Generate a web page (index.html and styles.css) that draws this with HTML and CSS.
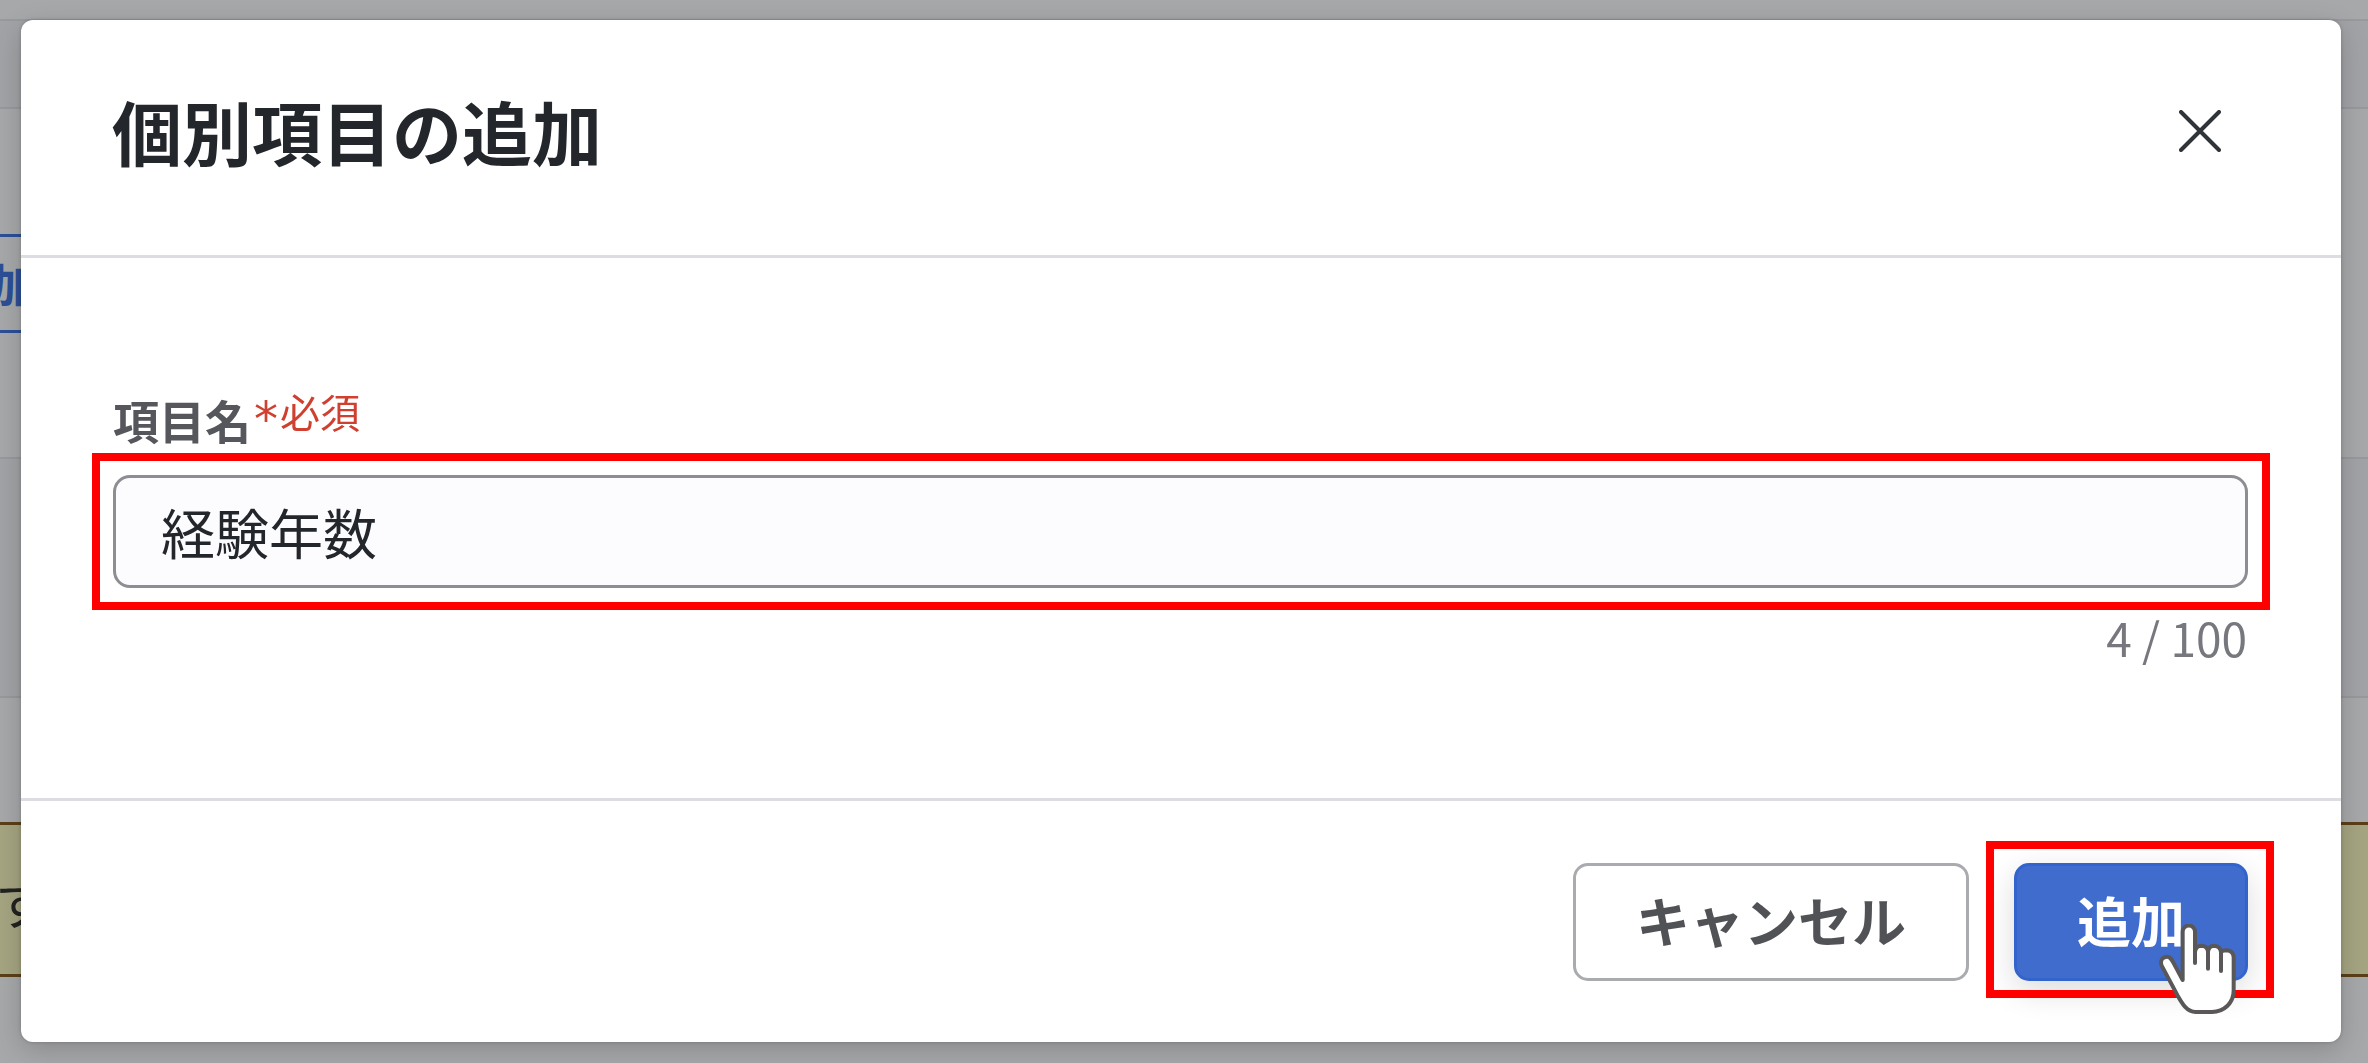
FILE: index.html
```
<!DOCTYPE html>
<html lang="ja">
<head>
    <meta charset="UTF-8">
    <meta name="viewport" content="width=device-width, initial-scale=1.0">
    <title>個別項目の追加</title>
    <link rel="stylesheet" href="styles.css">
</head>
<body>
    <!-- Page behind the dialog -->
    <div class="page" aria-hidden="true">
        <div class="page-top"></div>
        <div class="page-band page-heading"></div>
        <div class="page-section page-actions">
            <button type="button" class="page-add-btn" tabindex="-1">加</button>
        </div>
        <div class="page-band page-table-head"></div>
        <div class="page-section">
            <div class="page-notice">す</div>
        </div>
    </div>

    <div class="overlay">
        <form class="modal" role="dialog" aria-modal="true" aria-labelledby="modal-title">
            <div class="modal-header">
                <h1 class="modal-title" id="modal-title">個別項目の追加</h1>
                <button type="button" class="close-btn" aria-label="閉じる">
                    <svg class="close-icon" viewBox="0 0 42 42">
                        <path d="M2 2 L40 40 M40 2 L2 40"></path>
                    </svg>
                </button>
            </div>

            <div class="modal-body">
                <label class="field-label" for="item-name">項目名<span class="required"><span class="asterisk">*</span>必須</span></label>
                <div class="field-box highlight">
                    <input type="text" class="field-input" id="item-name" maxlength="100" value="経験年数" required>
                </div>
                <div class="counter">4 / 100</div>
            </div>

            <div class="modal-footer">
                <button type="button" class="btn cancel-btn">キャンセル</button>
                <div class="submit-box highlight">
                    <button type="submit" class="btn submit-btn">追加</button>
                    <svg class="cursor" viewBox="0 0 231 270" aria-hidden="true">
                        <path class="hand" d="M71 168 V23 A18 18 0 0 1 108 23 V83 Q110 65 128 65 Q146 66 147 83 Q149 65 166 65 Q184 66 186 84 Q190 79 204 79 Q223 81 224 100 V199 C224 238 194 264 159 264 H110 C83 264 69 238 56 215 L8 125 C2 110 11 98 24 98 C34 98 38 106 43 116 Z"></path>
                        <path class="fingers" d="M108 80 V117 M147 80 V134 M186 82 V141"></path>
                    </svg>
                </div>
            </div>
        </form>
    </div>
</body>
</html>
```
FILE: styles.css
```
/* Base Styles */
* {
    box-sizing: border-box;
}

body {
    margin: 0;
    height: 100vh;
    overflow: hidden;
    font-family: 'Noto Sans CJK JP', sans-serif;
    color: #23262b;
    background-color: #a7a8aa;
}

button, input {
    font-family: inherit;
}

/* Page behind the dialog */
.page {
    display: flex;
    flex-direction: column;
    height: 100%;
}

.page-top {
    height: 19px;
}

.page-band {
    background-color: #a2a3a6;
    border-top: 2px solid #98999c;
    border-bottom: 2px solid #98999c;
}

.page-heading {
    height: 90px;
}

.page-actions {
    height: 348px;
    padding-top: 125px;
}

.page-table-head {
    height: 241px;
}

.page-add-btn {
    display: block;
    height: 99px;
    width: 120px;
    margin-left: -13px;
    padding: 0 0 4px;
    border: 3px solid #2c4f96;
    background: none;
    color: #2c4f96;
    font-size: 46px;
    font-weight: 700;
    text-align: left;
}

.page-notice {
    height: 155px;
    margin: 124px -8px 0;
    border: 3px solid #5a4018;
    background-color: #a5a582;
    color: #222222;
    font-size: 54px;
    line-height: 154px;
}

/* Dialog */
.overlay {
    position: fixed;
    inset: 0;
    padding: 20px 27px 21px 21px;
}

.modal {
    display: flex;
    flex-direction: column;
    height: 100%;
    background-color: white;
    border-radius: 12px;
    box-shadow: 0 8px 28px rgba(0,0,0,0.18), 0 0 4px rgba(0,0,0,0.2);
}

.modal-header {
    display: flex;
    justify-content: space-between;
    align-items: center;
    padding: 61px 92px 74px 91px;
    border-bottom: 3px solid #dcdde2;
}

.modal-title {
    margin: 0;
    font-size: 70px;
    line-height: 100px;
    font-weight: 700;
}

.close-btn {
    display: flex;
    padding: 28px;
    border: none;
    background: none;
    cursor: pointer;
}

.close-icon {
    width: 42px;
    height: 42px;
    fill: none;
    stroke: #303338;
    stroke-width: 4;
    stroke-linecap: round;
}

/* Form field */
.modal-body {
    flex: 1;
    padding: 129px 93px 0 92px;
}

.field-label {
    display: flex;
    height: 64px;
    margin-bottom: 24px;
    font-size: 46px;
    line-height: 64px;
    font-weight: 700;
    color: #55575c;
}

.required {
    display: flex;
    margin-left: 3px;
    font-size: 40px;
    line-height: 48px;
    font-weight: 400;
    color: #cf4030;
}

.asterisk {
    margin-right: 2px;
    font-family: 'DejaVu Sans', sans-serif;
    font-size: 48px;
    line-height: 64px;
}

.field-input {
    display: block;
    width: 100%;
    height: 113px;
    padding: 0 45px;
    border: 3px solid #8d8e93;
    border-radius: 17px;
    background-color: #fcfcff;
    color: #23262b;
    font-size: 54px;
    outline: none;
}

.counter {
    margin-top: 17px;
    padding-right: 1px;
    font-size: 46px;
    line-height: 64px;
    text-align: right;
    color: #77787d;
}

/* Buttons */
.modal-footer {
    display: flex;
    justify-content: flex-end;
    gap: 45px;
    padding: 62px 93px 61px;
    border-top: 3px solid #dcdde2;
}

.btn {
    height: 118px;
    padding: 0 60px 4px;
    border: 3px solid #a9abaf;
    border-radius: 15px;
    font-size: 54px;
    font-weight: 700;
    line-height: 80px;
    cursor: pointer;
}

.cancel-btn {
    background-color: white;
    color: #505256;
}

.submit-btn {
    display: block;
    border-color: #3264cc;
    background-color: #406dcd;
    color: white;
    box-shadow: 0 10px 32px rgba(0,0,0,0.14);
}

/* Red frames around the parts to use */
.highlight {
    position: relative;
}

.highlight::after {
    content: '';
    position: absolute;
    inset: -22px -22px -22px -21px;
    border: 8px solid #ff0000;
    pointer-events: none;
}

.submit-box::after {
    inset: -22px -26px -17px -28px;
}

.cursor {
    position: absolute;
    right: 12px;
    bottom: -33px;
    z-index: 1;
    width: 77px;
    height: 90px;
}

.hand {
    fill: white;
    stroke: #595757;
    stroke-width: 12;
    stroke-linejoin: round;
}

.fingers {
    fill: none;
    stroke: #595757;
    stroke-width: 12;
    stroke-linecap: round;
}
```
